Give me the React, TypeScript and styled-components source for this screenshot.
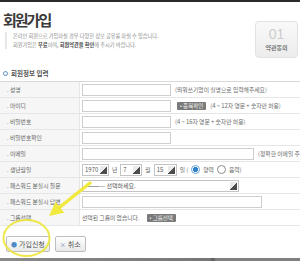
import React from "react";
import styled, { createGlobalStyle } from "styled-components";

const GlobalStyle = createGlobalStyle`
  html, body {
    margin: 0;
    padding: 0;
    background: #fff;
  }
  body {
    font-family: "Noto Sans CJK KR", "Noto Sans", sans-serif;
    color: #555;
  }
`;

const Page = styled.div`
  position: relative;
  width: 300px;
  height: 261px;
  overflow: hidden;
  display: flex;
  flex-direction: column;
`;

const TopLine = styled.div`
  flex-shrink: 0;
  height: 2px;
  background: #2b2b2b;
`;

const Header = styled.div`
  display: flex;
  justify-content: space-between;
  padding: 8px 2px 0 3px;
`;

const Title = styled.h1`
  margin: 0;
  font-size: 15px;
  line-height: 20px;
  font-weight: 700;
  letter-spacing: -2px;
  color: #3a3a3a;
`;

const Desc = styled.div`
  margin: 2px 0 0 2px;
  padding-left: 6px;
  border-left: 2px solid #e6e6e6;
  font-size: 5.2px;
  line-height: 8.6px;
  color: #8a8a8a;
  white-space: nowrap;

  b {
    color: #444;
  }
`;

const StepBox = styled.div`
  margin-top: 11px;
  width: 43px;
  height: 37px;
  box-sizing: border-box;
  border: 1px solid #e2e2e2;
  border-radius: 4px;
  background: linear-gradient(#f9f9f9, #ececec);
  display: flex;
  flex-direction: column;
  align-items: center;
  justify-content: center;
`;

const StepNum = styled.span`
  font-family: "Liberation Sans", sans-serif;
  font-size: 14px;
  line-height: 13px;
  color: #cdcdcd;
`;

const StepLabel = styled.span`
  margin-top: 2px;
  font-size: 6px;
  font-weight: 700;
  color: #7a7a7a;
`;

const SectionTitle = styled.div`
  margin: 10px 0 0 3px;
  height: 10px;
  display: flex;
  align-items: center;
  gap: 3px;
  font-size: 6.5px;
  font-weight: 700;
  color: #555;
`;

const Ring = styled.span`
  width: 3px;
  height: 3px;
  border-radius: 50%;
  border: 1.5px solid #5b8fc7;
`;

const Table = styled.div`
  margin-top: 3px;
  border-top: 1px solid #d8d8d8;
`;

const Row = styled.div`
  display: grid;
  grid-template-columns: 80px 1fr;
  height: 15px;
  border-bottom: 1px solid #e6e6e6;
`;

const Label = styled.div`
  display: flex;
  align-items: center;
  padding-left: 7px;
  background: #f6f6f6;
  border-right: 1px solid #e6e6e6;
  font-size: 5.8px;
  color: #666;
  white-space: nowrap;
`;

const Cell = styled.div`
  display: flex;
  align-items: center;
  gap: 3px;
  padding-left: 2px;
  font-size: 5.8px;
  color: #666;
  white-space: nowrap;
`;

const TextInput = styled.input<{ $w: number }>`
  width: ${(p) => p.$w}px;
  height: 12px;
  box-sizing: border-box;
  margin: 0;
  padding: 0;
  border: 1px solid #cfcfcf;
  background: #fff;
`;

const Hint = styled.span`
  margin-left: 1px;
  color: #6a6a6a;
`;

const DarkButton = styled.span<{ $ml?: number }>`
  margin-left: ${(p) => p.$ml ?? 0}px;
  padding: 0 3px;
  height: 8px;
  line-height: 8px;
  border-radius: 1px;
  background: #7a7a7a;
  color: #f4f4f4;
  font-size: 5.5px;
`;

const SelectBox = styled.span<{ $w: number }>`
  width: ${(p) => p.$w}px;
  height: 12px;
  box-sizing: border-box;
  border: 1px solid #c4c4c4;
  display: flex;
  align-items: center;
  justify-content: space-between;
  padding: 0 1px 0 2px;
  font-size: 6px;
  color: #555;
  background: #fff;
`;

const SelectArrow = styled.span`
  width: 7px;
  height: 8px;
  background: linear-gradient(135deg, #eaeaea 50%, #4d4d4d 50%);
`;

const Radio = styled.span<{ $on?: boolean }>`
  width: 7px;
  height: 7px;
  border-radius: 50%;
  border: 1px solid ${(p) => (p.$on ? "#6da3d6" : "#8a8a8a")};
  background: ${(p) =>
    p.$on ? "radial-gradient(circle, #2f83c9 0 2.3px, #fff 2.8px)" : "#fff"};
`;

const Actions = styled.div`
  display: flex;
  gap: 5px;
  margin: 10px 0 0 6px;
`;

const ActionButton = styled.span`
  height: 16px;
  box-sizing: border-box;
  padding: 0 4px;
  display: flex;
  align-items: center;
  gap: 2px;
  border: 1px solid #bdbdbd;
  border-radius: 2px;
  background: linear-gradient(#ffffff, #e9e9e9);
  font-size: 7px;
  color: #555;
`;

const Mark = styled.span<{ $c: string }>`
  color: ${(p) => p.$c};
  font-size: 6px;
`;

const BottomBar = styled.div`
  margin-top: auto;
  height: 3px;
  background: linear-gradient(90deg, #8a8a8a, #777 70%, #5a5a5a 71%, #808080 72%);
`;

const Overlay = styled.svg`
  position: absolute;
  left: 0;
  top: 0;
  pointer-events: none;
`;

export default function App() {
  return (
    <>
      <GlobalStyle />
      <Page>
        <TopLine />
        <Header>
          <div>
            <Title>회원가입</Title>
            <Desc>
              온라인 회원으로 가입하실 경우 다양한 정보 공유를 하실 수 있습니다.
              <br />
              회원가입은 <b>무료</b>이며, <b>회원약관을 확인</b>해 주시기 바랍니다.
            </Desc>
          </div>
          <StepBox>
            <StepNum>01</StepNum>
            <StepLabel>약관동의</StepLabel>
          </StepBox>
        </Header>

        <SectionTitle>
          <Ring />
          회원정보 입력
        </SectionTitle>

        <Table>
          <Row>
            <Label>. 성명</Label>
            <Cell>
              <TextInput $w={89} />
              <Hint>(띄워쓰기없이 실명으로 입력해주세요)</Hint>
            </Cell>
          </Row>
          <Row>
            <Label>. 아이디</Label>
            <Cell>
              <TextInput $w={89} />
              <DarkButton $ml={3}>• 중복확인</DarkButton>
              <Hint>(4 ~ 12자 영문 + 숫자만 허용)</Hint>
            </Cell>
          </Row>
          <Row>
            <Label>. 비밀번호</Label>
            <Cell>
              <TextInput type="password" $w={89} />
              <Hint>(4 ~ 16자 영문 + 숫자만 허용)</Hint>
            </Cell>
          </Row>
          <Row>
            <Label>. 비밀번호확인</Label>
            <Cell>
              <TextInput type="password" $w={89} />
            </Cell>
          </Row>
          <Row>
            <Label>. 이메일</Label>
            <Cell>
              <TextInput $w={172} />
              <Hint>(정확한 이메일 주</Hint>
            </Cell>
          </Row>
          <Row>
            <Label>. 생년월일</Label>
            <Cell>
              <SelectBox $w={27}>
                1970
                <SelectArrow />
              </SelectBox>
              년
              <SelectBox $w={22}>
                7
                <SelectArrow />
              </SelectBox>
              월
              <SelectBox $w={23}>
                15
                <SelectArrow />
              </SelectBox>
              일 (
              <Radio $on />
              양력
              <Radio />
              음력)
            </Cell>
          </Row>
          <Row>
            <Label>. 패스워드 분실시 질문</Label>
            <Cell>
              <SelectBox $w={157}>
                ———— 선택하세요.
                <SelectArrow />
              </SelectBox>
            </Cell>
          </Row>
          <Row>
            <Label>. 패스워드 분실시 답변</Label>
            <Cell>
              <TextInput $w={180} />
            </Cell>
          </Row>
          <Row>
            <Label>. 그룹선택</Label>
            <Cell>
              선택된 그룹이 없습니다.
              <DarkButton $ml={4}>• 그룹선택</DarkButton>
            </Cell>
          </Row>
        </Table>

        <Actions>
          <ActionButton>
            <Mark $c="#4f8cc6">●</Mark>가입신청
          </ActionButton>
          <ActionButton>
            <Mark $c="#5a7fb0">×</Mark>취소
          </ActionButton>
        </Actions>

        <BottomBar />

        <Overlay width="300" height="261" viewBox="0 0 300 261">
          <line
            x1="90"
            y1="183"
            x2="60"
            y2="207"
            stroke="#f1e82a"
            strokeWidth="3.5"
            strokeLinecap="round"
            opacity="0.9"
          />
          <polygon points="49,216 55.5,201.8 64.3,212.7" fill="#f1e82a" opacity="0.9" />
          <ellipse
            cx="26.5"
            cy="238"
            rx="23"
            ry="18"
            fill="none"
            stroke="#ede53a"
            strokeWidth="2"
            opacity="0.9"
          />
        </Overlay>
      </Page>
    </>
  );
}
